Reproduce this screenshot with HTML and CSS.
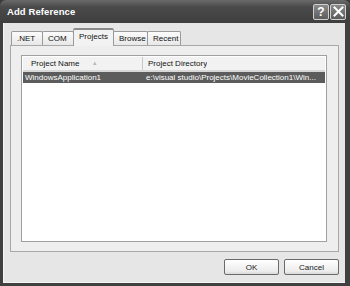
FILE: index.html
```html
<!DOCTYPE html>
<html lang="en">
<head>
  <meta charset="UTF-8">
  <title>Add Reference</title>
  <link rel="stylesheet" href="styles.css">
</head>
<body>

<div class="dialog">
  <div class="titlebar">
    <span class="title">Add Reference</span>
    <div class="caption-buttons">
      <span class="cap-btn">?</span>
      <span class="cap-btn">
        <svg width="11" height="11" viewBox="0 0 11 11"><path d="M1.5 1.5 L9.5 9.5 M9.5 1.5 L1.5 9.5" stroke="#fff" stroke-width="2" stroke-linecap="square"/></svg>
      </span>
    </div>
  </div>

  <div class="client">
    <div class="tabs">
      <span class="tab">.NET</span>
      <span class="tab">COM</span>
      <span class="tab active">Projects</span>
      <span class="tab">Browse</span>
      <span class="tab">Recent</span>
    </div>

    <div class="panel">
      <div class="listview">
        <div class="lv-header">
          <div class="col col-name">Project Name <span class="sort">&#9650;</span></div>
          <div class="col col-dir">Project Directory</div>
        </div>
        <div class="lv-row selected">
          <div class="col col-name">WindowsApplication1</div>
          <div class="col col-dir">e:\visual studio\Projects\MovieCollection1\Win...</div>
        </div>
      </div>
    </div>

    <div class="buttons">
      <button class="btn">OK</button>
      <button class="btn">Cancel</button>
    </div>
  </div>
</div>

</body>
</html>
```

FILE: styles.css
```css
body {
  margin: 0;
  background: #3a3a3a;
  font-family: "Liberation Sans", Arial, sans-serif;
  font-size: 8px;
  color: #111;
}

.dialog {
  width: 350px;
  height: 286px;
  display: flex;
  flex-direction: column;
  background: #404040;
  border-radius: 6px 6px 0 0;
  overflow: hidden;
}

.titlebar {
  height: 23px;
  display: flex;
  align-items: center;
  justify-content: space-between;
  padding: 0 4px 0 7px;
  background: linear-gradient(#6a6a6a, #4a4a4a 30%, #3e3e3e);
}

.title {
  color: #fff;
  font-weight: bold;
  font-size: 9.5px;
  letter-spacing: 0.1px;
}

.caption-buttons {
  display: flex;
  gap: 1px;
}

.cap-btn {
  width: 16px;
  height: 16px;
  box-sizing: border-box;
  border: 1px solid #d0d0d0;
  border-radius: 2px;
  background: linear-gradient(#8a8a8a, #5c5c5c);
  color: #fff;
  font-weight: bold;
  font-size: 12px;
  display: flex;
  align-items: center;
  justify-content: center;
}

.client {
  flex: 1;
  margin: 0 5px 3px 3px;
  background: #e6e6e6;
  border-left: 1px solid #f6f6f6;
  border-bottom: 1px solid #f6f6f6;
  display: flex;
  flex-direction: column;
  padding: 0 0 0 6px;
}

.tabs {
  display: flex;
  align-items: flex-end;
  height: 22px;
  padding-left: 1px;
}

.tab {
  height: 13px;
  padding: 0 5px;
  margin-right: -1px;
  line-height: 13px;
  border: 1px solid #9a9a9a;
  border-bottom: none;
  border-radius: 2px 2px 0 0;
  background: linear-gradient(#fbfbfb, #e8e8e8);
  box-sizing: content-box;
}

.tabs .tab:nth-child(1) { width: 20px; }
.tabs .tab:nth-child(2) { width: 20px; }
.tabs .tab:nth-child(4) { width: 23px; }
.tabs .tab:nth-child(5) { width: 22px; }

.tab.active {
  height: 16px;
  width: 29px;
  line-height: 14px;
  background: #f2f2f2;
  border-top: 2px solid #8a8a8a;
  position: relative;
  z-index: 1;
  margin-bottom: -1px;
}

.panel {
  width: 329px;
  height: 207px;
  box-sizing: border-box;
  border: 1px solid #a8a8a8;
  background: #eeeeee;
  padding: 9px 11px 9px 10px;
}

.listview {
  height: 100%;
  box-sizing: border-box;
  border: 1px solid #a0a0a0;
  background: #fff;
  padding: 1px;
}

.lv-header {
  display: flex;
  height: 13px;
  background: #f2f2f2;
  border-bottom: 2px solid #d8d8d8;
  line-height: 13px;
}

.lv-header .col-name {
  border-right: 1px solid #c8c8c8;
}

.sort {
  color: #b8b8b8;
  font-size: 6px;
  margin-left: 10px;
  vertical-align: 1px;
}

.col {
  box-sizing: border-box;
  white-space: nowrap;
  overflow: hidden;
}

.col-name {
  width: 120px;
  padding-left: 8px;
}

.lv-header .col-dir {
  padding-left: 5px;
}

.lv-row {
  display: flex;
  height: 11px;
  line-height: 11px;
}

.lv-row .col-name {
  padding-left: 2px;
}

.lv-row .col-dir {
  padding-left: 3px;
  flex: 1;
}

.lv-row.selected {
  background: #5c5c5c;
  color: #fff;
}

.buttons {
  display: flex;
  justify-content: flex-end;
  gap: 5px;
  padding: 7px 6px 0 0;
}

.btn {
  width: 55px;
  height: 16px;
  padding: 0;
  font-family: "Liberation Sans", Arial, sans-serif;
  font-size: 8px;
  color: #222;
  border: 1px solid #6a6a6a;
  border-radius: 2px;
  background: linear-gradient(#ffffff, #ececec 80%, #d8d8d8);
}
```
